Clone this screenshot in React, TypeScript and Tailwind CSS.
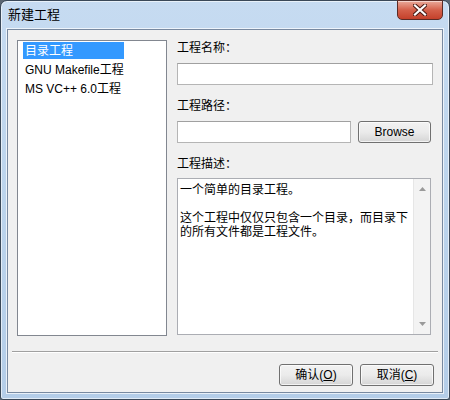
import React from 'react';

const projectTypes = ['目录工程', 'GNU Makefile工程', 'MS VC++ 6.0工程'];

const CloseButton: React.FC = () => {
  return (
    <div className="w-[46px] h-[20px] mt-[-1px] rounded-b-[5px] border border-[#5a2b25] bg-gradient-to-b from-[#e9a99a] via-[#d4604a] to-[#c4402a] flex items-center justify-center shadow-[inset_0_1px_0_rgba(255,255,255,0.5)]">
      <svg width="14" height="12" viewBox="0 0 14 12">
        <path d="M2 1.5 L12 10.5 M12 1.5 L2 10.5" stroke="#4a1a14" strokeWidth="4.2" strokeLinecap="square" />
        <path d="M2 1.5 L12 10.5 M12 1.5 L2 10.5" stroke="#ffffff" strokeWidth="2.2" strokeLinecap="square" />
      </svg>
    </div>
  );
};

const Btn: React.FC<{ w: string; children: React.ReactNode }> = ({ w, children }) => {
  return (
    <div
      className={`${w} h-[22px] rounded-[3px] border border-[#707070] bg-gradient-to-b from-[#f2f2f2] via-[#ebebeb] to-[#d5d5d5] flex items-center justify-center text-[12px] text-black shadow-[inset_0_0_0_1px_rgba(255,255,255,0.7)]`}
    >
      {children}
    </div>
  );
};

const Arrow: React.FC<{ up?: boolean }> = ({ up }) => (
  <svg width="7" height="4" viewBox="0 0 7 4">
    <path d={up ? 'M0 4 L3.5 0 L7 4 Z' : 'M0 0 L3.5 4 L7 0 Z'} fill="#9a9a9a" />
  </svg>
);

export default function App() {
  return (
    <div className="w-[450px] h-[400px] bg-[#5b6673] font-['Liberation_Sans','Noto_Sans_CJK_SC',sans-serif] text-black">
      <div className="w-[450px] h-[400px] rounded-t-[7px] rounded-b-[3px] border border-[#3a4858] bg-gradient-to-b from-[#c6dbf1] via-[#bcd4ec] to-[#b4cde8] flex flex-col shadow-[inset_0_0_0_1px_rgba(255,255,255,0.6)]">
        {/* title bar */}
        <div className="h-[28px] flex items-start justify-between pl-[7px] pr-[6px]">
          <span className="mt-[6px] text-[13px] leading-[16px] text-black">新建工程</span>
          <CloseButton />
        </div>

        {/* client area */}
        <div className="mx-[6px] mb-[6px] flex-1 border border-[#7889a0] bg-[#f0f0f0] flex flex-col shadow-[0_0_0_1px_rgba(255,255,255,0.7)]">
          <div className="flex gap-[10px] pt-[10px] px-[9px]">
            {/* list */}
            <div className="w-[150px] h-[296px] border border-[#828790] bg-white pt-[1px] px-[5px]">
              {projectTypes.map((t, i) => (
                <div
                  key={i}
                  className={`h-[17px] mb-[2px] flex items-center pl-[2px] text-[12px] whitespace-nowrap ${
                    i === 0 ? 'w-[101px] bg-[#3399ff] text-white' : 'text-black'
                  }`}
                >
                  {t}
                </div>
              ))}
            </div>

            {/* form */}
            <div className="flex-1 flex flex-col text-[12px]">
              <div className="h-[16px] leading-[16px]">工程名称：</div>
              <div className="mt-[7px] h-[22px] border border-[#b5b5b5] border-t-[#a0a0a0] bg-white" />
              <div className="mt-[13px] h-[16px] leading-[16px]">工程路径：</div>
              <div className="mt-[7px] flex gap-[7px]">
                <div className="w-[174px] h-[22px] border border-[#b5b5b5] border-t-[#a0a0a0] bg-white" />
                <Btn w="w-[73px]">Browse</Btn>
              </div>
              <div className="mt-[13px] h-[16px] leading-[16px]">工程描述：</div>
              <div className="mt-[6px] h-[157px] w-[254px] border border-[#abadb3] bg-white flex">
                <div className="flex-1 pt-[4px] pl-[2px] leading-[14px] whitespace-nowrap overflow-hidden">
                  <div>一个简单的目录工程。</div>
                  <div className="h-[14px]" />
                  <div>这个工程中仅仅只包含一个目录，而目录下</div>
                  <div>的所有文件都是工程文件。</div>
                </div>
                <div className="w-[17px] bg-[#f3f3f3] border-l border-[#e6e6e6] flex flex-col items-center justify-between py-[8px]">
                  <Arrow up />
                  <Arrow />
                </div>
              </div>
            </div>
          </div>

          {/* separator */}
          <div className="mx-[4px] mt-[15px] h-[2px] border-t border-[#a0a0a0] border-b border-b-white" />

          {/* buttons */}
          <div className="flex justify-end gap-[7px] pr-[8px] mt-[11px]">
            <Btn w="w-[74px]">
              确认(<span className="underline">O</span>)
            </Btn>
            <Btn w="w-[74px]">
              取消(<span className="underline">C</span>)
            </Btn>
          </div>
        </div>
      </div>
    </div>
  );
}
